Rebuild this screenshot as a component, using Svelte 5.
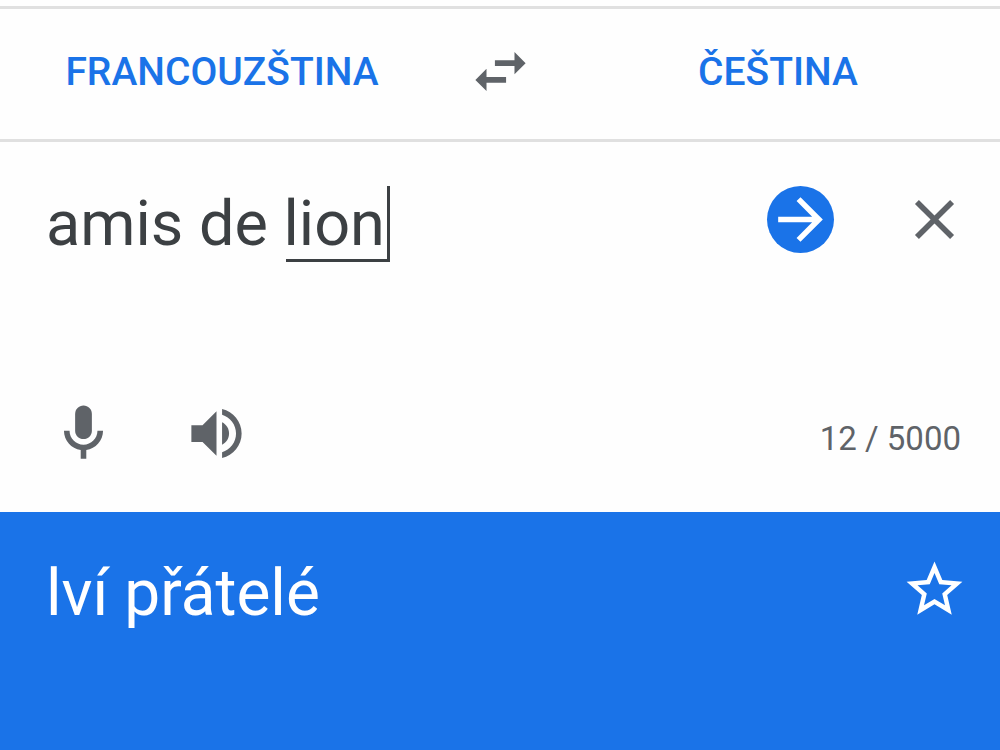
<script lang="ts">
	const limit = 5000;

	let source = $state('amis de lion');
	let from = $state('Francouzština');
	let to = $state('Čeština');
	let translation = $state('lví přátelé');
	let saved = $state(false);

	function swap() {
		[from, to] = [to, from];
		[source, translation] = [translation, source];
	}
</script>

<main class="translator">
	<header class="languages">
		<button class="language" type="button">{from}</button>
		<button class="icon swap" type="button" aria-label="Prohodit jazyky" onclick={swap}>
			<svg viewBox="0 0 24 24" aria-hidden="true">
				<path d="M6.99 11L3 15l3.99 4v-3H14v-2H6.99v-3zM21 9l-3.99-4v3H10v2h7.01v3L21 9z" />
			</svg>
		</button>
		<button class="language" type="button">{to}</button>
	</header>

	<section class="source">
		<div class="entry">
			<div class="field">
				<textarea aria-label="Zdrojový text" rows="2" maxlength={limit} spellcheck="false" bind:value={source}></textarea>
				<!-- word being composed, with the caret at its end -->
				{#if source === 'amis de lion'}
					<span class="composing" aria-hidden="true"></span>
				{/if}
			</div>
			<button class="icon go" type="button" aria-label="Přeložit">
				<svg viewBox="0 0 24 24" aria-hidden="true">
					<path d="M12 4l-1.41 1.41L16.17 11H4v2h12.17l-5.58 5.59L12 20l8-8z" />
				</svg>
			</button>
			<button class="icon" type="button" aria-label="Vymazat text" onclick={() => (source = '')}>
				<svg viewBox="0 0 24 24" aria-hidden="true">
					<path d="M19 6.41L17.59 5 12 10.59 6.41 5 5 6.41 10.59 12 5 17.59 6.41 19 12 13.41 17.59 19 19 17.59 13.41 12z" />
				</svg>
			</button>
		</div>

		<div class="tools">
			<button class="icon" type="button" aria-label="Hlasové zadávání">
				<svg viewBox="0 0 24 24" aria-hidden="true">
					<path d="M12 14c1.66 0 3-1.34 3-3V5c0-1.66-1.34-3-3-3S9 3.34 9 5v6c0 1.66 1.34 3 3 3z" />
					<path d="M17 11c0 2.76-2.24 5-5 5s-5-2.24-5-5H5c0 3.53 2.61 6.43 6 6.92V21h2v-3.08c3.39-.49 6-3.39 6-6.92h-2z" />
				</svg>
			</button>
			<button class="icon" type="button" aria-label="Poslechnout">
				<svg viewBox="0 0 24 24" aria-hidden="true">
					<path d="M3 9v6h4l5 5V4L7 9H3z" />
					<path d="M14 7.97v8.05c1.48-.73 2.5-2.25 2.5-4.02 0-1.77-1.02-3.29-2.5-4.03z" />
					<path d="M14 3.23v2.06c2.89.86 5 3.54 5 6.71s-2.11 5.85-5 6.71v2.06c4.01-.91 7-4.49 7-8.77s-2.99-7.86-7-8.77z" />
				</svg>
			</button>
			<span class="count">{source.length} / {limit}</span>
		</div>
	</section>

	<section class="result">
		<p>{translation}</p>
		<button class="icon" type="button" aria-label="Uložit překlad" aria-pressed={saved} onclick={() => (saved = !saved)}>
			<svg viewBox="0 0 24 24" aria-hidden="true">
				{#if saved}
					<path d="M12 17.27L18.18 21l-1.64-7.03L22 9.24l-7.19-.61L12 2 9.19 8.63 2 9.24l5.46 4.73L5.82 21z" />
				{:else}
					<path d="M22 9.24l-7.19-.62L12 2 9.19 8.63 2 9.24l5.46 4.73L5.82 21 12 17.27 18.18 21l-1.63-7.03L22 9.24zM12 15.4l-3.76 2.27 1-4.28-3.32-2.88 4.38-.38L12 6.1l1.71 4.04 4.38.38-3.32 2.88 1 4.28L12 15.4z" />
				{/if}
			</svg>
		</button>
	</section>
</main>

<style>
	:global(body) {
		margin: 0;
		background: #fefefe;
	}

	.translator {
		display: flex;
		flex-direction: column;
		min-height: 100vh;
		box-sizing: border-box;
		padding-top: 6px;
		font-family: Roboto, 'Liberation Sans', sans-serif;
		color: #3c4043;
	}

	button {
		border: 0;
		padding: 0;
		background: none;
		font: inherit;
		cursor: pointer;
	}

	.icon {
		flex: none;
		width: 67px;
		height: 67px;
		color: #5f6368;
	}

	.icon svg {
		display: block;
		width: 100%;
		height: 100%;
		fill: currentColor;
	}

	.languages {
		display: grid;
		grid-template-columns: 1fr 112px 1fr;
		align-items: center;
		justify-items: center;
		padding: 29px 0 34px;
		border: solid #e0e0e0;
		border-width: 3px 0;
	}

	.language {
		color: #1a73e8;
		font-size: 39px;
		font-weight: 500;
		line-height: 48px;
		text-transform: uppercase;
	}

	.source {
		display: flex;
		flex-direction: column;
		gap: 62px;
		padding: 44px 32px 45px 46px;
	}

	.entry {
		display: flex;
		align-items: flex-start;
		gap: 67px;
	}

	.field {
		position: relative;
		flex: 1;
	}

	textarea {
		display: block;
		width: 100%;
		box-sizing: border-box;
		border: 0;
		padding: 0;
		outline: 0;
		resize: none;
		overflow: hidden;
		background: transparent;
		color: inherit;
		font: inherit;
		font-size: 63px;
		line-height: 76px;
	}

	.composing {
		position: absolute;
		top: 0;
		left: 240px;
		width: 101px;
		height: 73px;
		border: solid #3c4043;
		border-width: 0 3px 3px 0;
		pointer-events: none;
	}

	.go {
		border-radius: 50%;
		background: #1a73e8;
		color: #fff;
	}

	.tools {
		display: flex;
		align-items: center;
		gap: 66px;
	}

	.tools .icon:first-child {
		margin-left: 4px;
	}

	.count {
		margin-left: auto;
		padding: 10px 7px 0 0;
		color: #5f6368;
		font-size: 33px;
		line-height: 40px;
	}

	.result {
		display: flex;
		flex: 1;
		align-items: flex-start;
		justify-content: space-between;
		padding: 44px 32px 44px 46px;
		background: #1a73e8;
		color: #fff;
	}

	.result p {
		margin: 0;
		font-size: 64px;
		line-height: 76px;
	}

	.result .icon {
		color: #fff;
	}
</style>
